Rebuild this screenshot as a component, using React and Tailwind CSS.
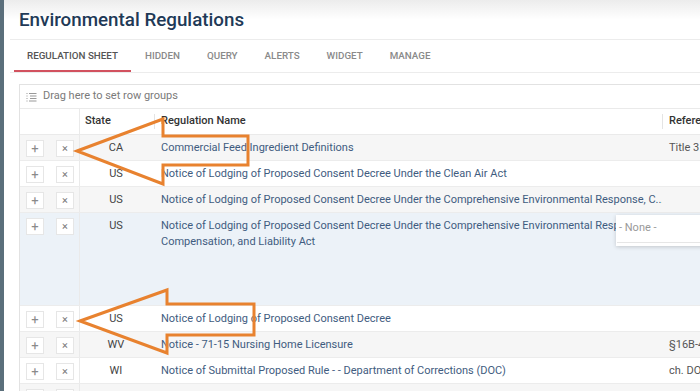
import React from 'react';

const rows = [
    { state: 'CA', name: 'Commercial Feed Ingredient Definitions', ref: 'Title 3', bg: 'bg-[#f6f6f6]' },
    { state: 'US', name: 'Notice of Lodging of Proposed Consent Decree Under the Clean Air Act', ref: '', bg: 'bg-white' },
    { state: 'US', name: 'Notice of Lodging of Proposed Consent Decree Under the Comprehensive Environmental Response, C...', ref: '', bg: 'bg-[#f6f6f6]' },
    { state: 'US', name: 'Notice of Lodging of Proposed Consent Decree Under the Comprehensive Environmental Response, Compensation, and Liability Act', ref: '', bg: 'bg-[#ecf2f8]', tall: true },
    { state: 'US', name: 'Notice of Lodging of Proposed Consent Decree', ref: '', bg: 'bg-white' },
    { state: 'WV', name: 'Notice - 71-15 Nursing Home Licensure', ref: '§16B-4', bg: 'bg-[#f6f6f6]' },
    { state: 'WI', name: 'Notice of Submittal Proposed Rule - - Department of Corrections (DOC)', ref: 'ch. DOC', bg: 'bg-white' },
    { state: '', name: '', ref: '', bg: 'bg-[#f6f6f6]' },
];

const tabs = ['Regulation Sheet', 'Hidden', 'Query', 'Alerts', 'Widget', 'Manage'];

function RowButtons() {
    return (
        <div className="flex gap-[12px] pl-[6px] pt-[5px]">
            <div className="w-[18px] h-[17px] bg-white border border-[#e6e6e6] flex items-center justify-center text-[#8a8a8a] text-[13px] leading-none">+</div>
            <div className="w-[18px] h-[17px] bg-white border border-[#e6e6e6] flex items-center justify-center text-[#7a7a7a] text-[11px] leading-none">×</div>
        </div>
    );
}

export default function App() {
    return (
        <div className="relative flex w-[700px] h-[391px] overflow-hidden" style={{ fontFamily: 'Roboto, "Liberation Sans", sans-serif' }}>
            <div className="w-[4px] bg-[#5b6f7b] shrink-0"></div>
            <div className="relative flex-1 bg-white overflow-hidden">
                {/* Header */}
                <div className="bg-gradient-to-b from-[#ececec] via-white to-white h-[39px] pl-[15px] pt-[7px]">
                    <h1 className="text-[18.8px] font-medium text-[#1f3a57] leading-[26px]">Environmental Regulations</h1>
                </div>

                {/* Tabs */}
                <div className="ml-[6px] pl-[4px] border-t border-b border-[#ececec] h-[34px] flex">
                    {tabs.map((t, i) => (
                        <div key={t} className={`relative px-[13px] flex items-center text-[9.8px] font-medium uppercase ${i === 0 ? 'text-[#555]' : 'text-[#8a8a8a]'} ${i === 0 ? 'mr-[1px]' : 'mr-[1px]'}`}>
                            {t}
                            {i === 0 && <div className="absolute left-0 right-0 bottom-[0px] h-[2px] bg-[#d2525f]"></div>}
                        </div>
                    ))}
                </div>

                {/* Grid */}
                <div className="ml-[15px] mt-[11px] border-l border-t border-[#e2e2e2]">
                    <div className="h-[24px] flex items-center pl-[6px] gap-[6px] border-b border-[#eaeaea] text-[11px] text-[#7a7a7a]">
                        <svg width="11" height="10" viewBox="0 0 11 10" fill="none" stroke="#999" strokeWidth="1">
                            <path d="M0.5 1.5h1M3 1.5h7.5M0.5 4h1M4 4h6.5M0.5 6.5h1M4 6.5h6.5M0.5 9h1M3 9h7.5" />
                        </svg>
                        <span>Drag here to set row groups</span>
                    </div>
                    {/* header row */}
                    <div className="flex h-[26px] border-b border-[#eaeaea] text-[11px] font-medium text-[#333]">
                        <div className="w-[60px] border-r border-[#eaeaea] shrink-0"></div>
                        <div className="w-[74px] shrink-0 flex items-center pl-[5px]">State</div>
                        <div className="w-[508px] shrink-0 flex items-center pl-[6px] border-l border-[#e4e4e4] my-[5px]">Regulation Name</div>
                        <div className="flex-1 flex items-center pl-[6px] border-l border-[#e4e4e4] my-[5px] whitespace-nowrap">Reference</div>
                    </div>
                    {rows.map((r, i) => (
                        <div key={i} className={`flex ${r.tall ? 'h-[93px]' : 'h-[26px]'} border-b border-[#ececec] text-[11px] ${r.bg}`}>
                            <div className="w-[60px] border-r border-[#eaeaea] shrink-0">
                                <RowButtons />
                            </div>
                            <div className="w-[74px] shrink-0 text-center text-[#444] pt-[6px] leading-[14px] pr-[2px]">{r.state}</div>
                            <div className={`w-[508px] shrink-0 pl-[7px] pr-[4px] text-[#3f5c80] ${r.tall ? 'leading-[16px] pt-[5px]' : 'pt-[6px] leading-[14px] whitespace-nowrap overflow-hidden'}`}>{r.name}</div>
                            <div className="flex-1 pl-[7px] pt-[6px] leading-[14px] text-[#555] whitespace-nowrap overflow-hidden">{r.ref}</div>
                        </div>
                    ))}
                </div>

                {/* Dropdown popup */}
                <div className="absolute left-[612px] top-[215px] w-[100px] h-[31px] bg-white shadow-[0_1px_4px_rgba(0,0,0,0.18)] px-[1px]">
                    <div className="h-[28px] border-b border-[#e6e6e6] flex items-center pl-[2px] text-[11px] text-[#999]">- None -</div>
                </div>
            </div>

            {/* Arrows overlay */}
            <svg className="absolute left-0 top-0 pointer-events-none" width="700" height="391" viewBox="0 0 700 391" fill="none" stroke="#e8822f" strokeWidth="3" strokeLinejoin="miter">
                <path d="M77 151 L163 119 L163 136 L248 136 L248 165 L163 165 L163 184 Z" />
                <path d="M80 321 L167 290 L167 304 L254 304 L254 335 L167 335 L167 353 Z" />
            </svg>
        </div>
    );
}
